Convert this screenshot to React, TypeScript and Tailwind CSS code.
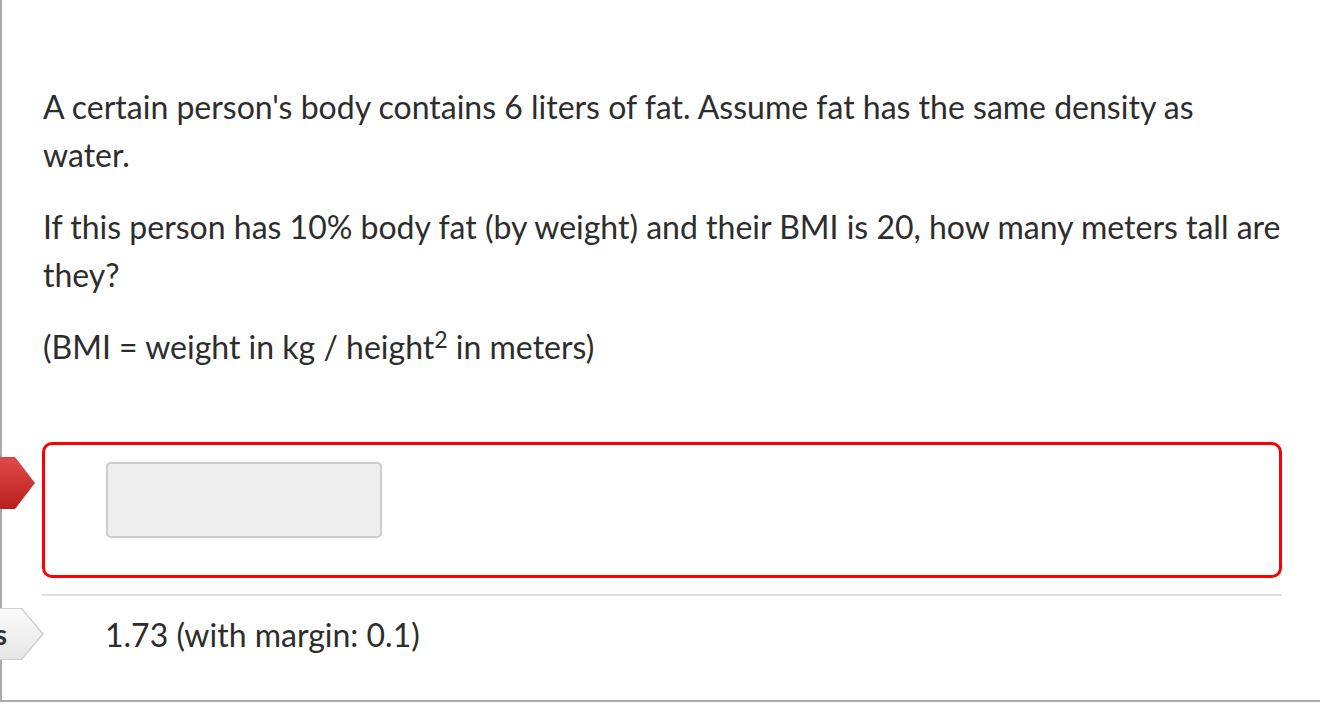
import React from 'react';

export default function App() {
  return (
    <div className="min-h-screen bg-white overflow-hidden" style={{ fontFamily: 'Lato, "Open Sans", sans-serif' }}>
      <div className="relative h-[702px] border-l-2 border-b-2 border-[#aaaaaa] pl-[41px] pr-[38px] pt-[83px] text-[32px] leading-[48px] text-[#2d2d2d]">
        {/* Question text */}
        <p className="mb-[24px]">
          A certain person's body contains 6 liters of fat. Assume fat has the same density as water.
        </p>
        <p className="mb-[24px]">
          If this person has 10% body fat (by weight) and their BMI is 20, how many meters tall are they?
        </p>
        <p>
          (BMI = weight in kg / height<sup className="text-[23px]">2</sup> in meters)
        </p>

        {/* Answer box */}
        <div className="relative mt-[71px] -ml-px">
          <div className="absolute left-[-207px] top-[15px] w-[200px] h-[52px] bg-gradient-to-b from-[#e24a4a] to-[#b51f1f] [clip-path:polygon(0_0,180px_0,200px_50%,180px_100%,0_100%)]" />
          <div className="h-[136px] rounded-[10px] border-[3px] border-[#ff0000] pl-[61px] pt-[17px]">
            <div className="w-[276px] h-[76px] rounded-[5px] border-2 border-[#cccccc] bg-[#eeeeee]" />
          </div>
        </div>

        <div className="mt-[16px] -ml-px h-[2px] bg-[#dddddd]" />

        {/* Correct answer row */}
        <div className="relative -ml-px mt-[12px] flex items-center h-[52px]">
          <div className="absolute left-[-222px] top-0 w-[224px] h-[52px] bg-[#cfcfcf] [clip-path:polygon(0_0,202px_0,224px_50%,202px_100%,0_100%)]">
            <div className="absolute inset-[1px] right-[2px] bg-gradient-to-b from-[#fbfbfb] to-[#e6e6e6] [clip-path:polygon(0_0,200px_0,221px_50%,200px_100%,0_100%)] flex items-center justify-end pr-[35px] text-[28px] font-bold text-[#333333] whitespace-nowrap">
              Correct Answers
            </div>
          </div>
          <span className="pl-[63px] pt-[2px]">1.73 (with margin: 0.1)</span>
        </div>
      </div>
    </div>
  );
}
